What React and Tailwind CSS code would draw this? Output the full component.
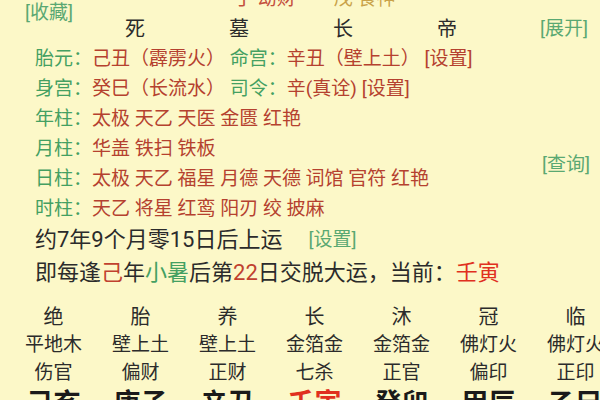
const G = "text-[#44a062]";
const R = "text-[#b5412f]";

function Row({ children }) {
  return (
    <div className="h-[30px] leading-[30px] text-[19px] pl-[35px] whitespace-nowrap">
      {children}
    </div>
  );
}

function Lbl({ children }) {
  return <span className={G}>{children}：</span>;
}

export default function App() {
  const changsheng = ["绝", "胎", "养", "长", "沐", "冠", "临"];
  const nayin = ["平地木", "壁上土", "壁上土", "金箔金", "金箔金", "佛灯火", "佛灯火"];
  const shishen = ["伤官", "偏财", "正财", "七杀", "正官", "偏印", "正印"];
  const ganzhi = ["己亥", "庚子", "辛丑", "壬寅", "癸卯", "甲辰", "乙巳"];
  return (
    <div className="w-[600px] h-[400px] overflow-hidden bg-[#fcf8c8] text-[#2b2b2b] font-['Roboto','Noto_Sans_CJK_SC',sans-serif]">
      {/* cut-off top row */}
      <div className="h-[18px] flex items-start whitespace-nowrap">
        <span className="ml-[25px] mt-[3px] text-[19px] leading-[20px] text-[#5aa872]">[收藏]</span>
        <span className="ml-[161px] -mt-[11px] text-[19px] leading-[20px] text-[#c4503e]">丁 劫财</span>
        <span className="ml-[38px] -mt-[11px] text-[19px] leading-[20px] text-[#c9a24a]">戊 食神</span>
      </div>
      {/* header */}
      <div className="h-[22px] flex items-start pl-[83px] whitespace-nowrap">
        {["死", "墓", "长", "帝"].map((t) => (
          <div key={t} className="w-[104px] text-center text-[20px] leading-[22px]">{t}</div>
        ))}
        <span className="ml-[41px] text-[19px] leading-[22px] text-[#5aa872]">[展开]</span>
      </div>
      {/* label rows */}
      <div className="mt-[4px] flex justify-between">
        <div className="flex flex-col">
          <Row>
            <Lbl>胎元</Lbl>
            <span className={R}>己丑（霹雳火）</span>
            <span> </span>
            <Lbl>命宫</Lbl>
            <span className={R}>辛丑（壁上土） [设置]</span>
          </Row>
          <Row>
            <Lbl>身宫</Lbl>
            <span className={R}>癸巳（长流水）</span>
            <span> </span>
            <Lbl>司令</Lbl>
            <span className={R}>辛(真诠) [设置]</span>
          </Row>
          <Row>
            <Lbl>年柱</Lbl>
            <span className={R}>太极 天乙 天医 金匮 红艳</span>
          </Row>
          <Row>
            <Lbl>月柱</Lbl>
            <span className={R}>华盖 铁扫 铁板</span>
          </Row>
          <Row>
            <Lbl>日柱</Lbl>
            <span className={R}>太极 天乙 福星 月德 天德 词馆 官符 红艳</span>
          </Row>
          <Row>
            <Lbl>时柱</Lbl>
            <span className={R}>天乙 将星 红鸾 阳刃 绞 披麻</span>
          </Row>
        </div>
        <div className="pt-[110px] mr-[10px]">
          <span className="text-[19px] leading-[20px] text-[#5aa872]">[查询]</span>
        </div>
      </div>
      {/* 上运 */}
      <div className="h-[32px] flex items-center pl-[35px] whitespace-nowrap">
        <span className="text-[22px] leading-[32px]">约7年9个月零15日后上运</span>
        <span className="ml-[26px] text-[19px] leading-[32px] text-[#5aa872]">[设置]</span>
      </div>
      <div className="h-[34px] leading-[34px] text-[22px] pl-[35px] whitespace-nowrap">
        即每逢<span className="text-[#c0412f]">己</span>年<span className="text-[#44a062]">小暑</span>后第<span className="text-[#c0412f]">22</span>日交脱大运，当前：<span className="text-[#e0301e]">壬寅</span>
      </div>
      {/* bottom grid */}
      <div className="mt-[13px] ml-[10px] w-[609px] grid grid-cols-[repeat(7,87px)] text-center whitespace-nowrap">
        {changsheng.map((t, i) => (
          <div key={"a" + i} className="text-[20px] leading-[28px]">{t}</div>
        ))}
        {nayin.map((t, i) => (
          <div key={"b" + i} className="text-[19px] leading-[28px]">{t}</div>
        ))}
        {shishen.map((t, i) => (
          <div key={"c" + i} className="text-[19px] leading-[28px]">{t}</div>
        ))}
        {ganzhi.map((t, i) => (
          <div key={"d" + i} className={"text-[27px] leading-[34px] font-bold " + (t === "壬寅" ? "text-[#e0301e]" : "text-[#1a1a1a]")}>{t}</div>
        ))}
      </div>
    </div>
  );
}
